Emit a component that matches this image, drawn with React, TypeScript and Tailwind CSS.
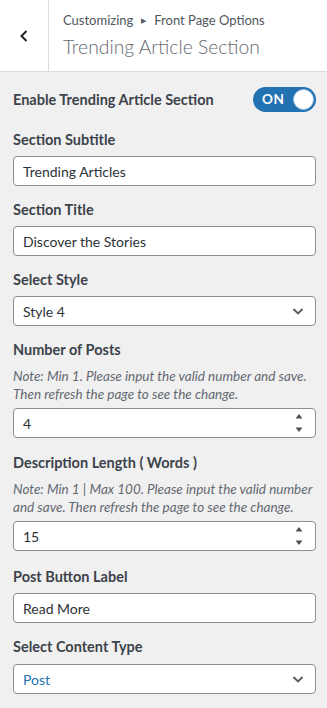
import React from 'react'

const FONT = { fontFamily: 'Lato, "Open Sans", Arial, sans-serif' }

const Label = ({ children }: { children: React.ReactNode }) => (
  <div className="text-[14.5px] font-bold text-[#3c434a] leading-[20px]">{children}</div>
)

const Note = ({ children }: { children: React.ReactNode }) => (
  <p className="mt-[7px] text-[13.5px] italic text-[#646970] leading-[18px]">{children}</p>
)

const TextInput = ({ value, mt = 'mt-[6px]' }: { value: string; mt?: string }) => (
  <div className={`${mt} h-[30px] rounded-[4px] border border-[#8c8f94] bg-white px-[9px] flex items-center text-[14px] text-[#2c3338]`}>
    {value}
  </div>
)

const NumberInput = ({ value }: { value: string }) => (
  <div className="mt-[5px] h-[30px] rounded-[4px] border border-[#8c8f94] bg-white pl-[9px] pr-[12px] flex items-center justify-between text-[14px] text-[#2c3338]">
    <span>{value}</span>
    <svg width="8" height="22" viewBox="0 0 8 22">
      <path d="M4 2 L7.5 6.5 L0.5 6.5 Z" fill="#505050" />
      <path d="M4 20 L7.5 15.5 L0.5 15.5 Z" fill="#505050" />
    </svg>
  </div>
)

const Select = ({ value, blue, mt = 'mt-[6px]' }: { value: string; blue?: boolean; mt?: string }) => (
  <div
    className={`${mt} h-[30px] rounded-[4px] border border-[#8c8f94] bg-white pl-[9px] pr-[10px] flex items-center justify-between text-[14px] ${
      blue ? 'text-[#2271b1]' : 'text-[#2c3338]'
    }`}
  >
    <span>{value}</span>
    <svg width="14" height="14" viewBox="0 0 14 14" fill="none">
      <path d="M2.5 5 L7 9.5 L11.5 5" stroke="#50575e" strokeWidth="1.8" />
    </svg>
  </div>
)

export default function App() {
  return (
    <div style={FONT} className="w-[327px] h-[708px] bg-[#f0f0f1] overflow-hidden">
      {/* Header */}
      <div className="flex h-[72px] bg-white border-b border-[#dcdcde]">
        <div className="w-[49px] shrink-0 border-r border-[#dcdcde] flex items-center justify-center">
          <svg width="12" height="14" viewBox="0 0 12 14" fill="none">
            <path d="M8.5 2 L3.5 7 L8.5 12" stroke="#1d2327" strokeWidth="2" />
          </svg>
        </div>
        <div className="pl-[14px] pt-[10px]">
          <div className="text-[13px] text-[#50575e] leading-[20px] flex items-center">
            Customizing
            <span className="mx-[8px] text-[7px] text-[#50575e]">▶</span>
            Front Page Options
          </div>
          <div className="text-[19.3px] font-light text-[#646970] leading-[28px] mt-[3px]">
            Trending Article Section
          </div>
        </div>
      </div>

      {/* Body */}
      <div className="pl-[13px] pr-[11px] pt-[15px] flex flex-col">
        <div className="flex items-center justify-between">
          <Label>Enable Trending Article Section</Label>
          <div className="w-[63px] h-[25px] rounded-full bg-[#2271b1] flex items-center justify-between pl-[9px] pr-[2px]">
            <span className="text-white text-[13.5px] font-bold tracking-[0.5px]">ON</span>
            <span className="w-[21px] h-[21px] rounded-full bg-white border border-[#9ec2e6]" />
          </div>
        </div>

        <div className="mt-[18px]">
          <Label>Section Subtitle</Label>
          <TextInput value="Trending Articles" />
        </div>

        <div className="mt-[14px]">
          <Label>Section Title</Label>
          <TextInput value="Discover the Stories" />
        </div>

        <div className="mt-[14px]">
          <Label>Select Style</Label>
          <Select value="Style 4" />
        </div>

        <div className="mt-[14px]">
          <Label>Number of Posts</Label>
          <Note>
            Note: Min 1. Please input the valid number and save. Then refresh the page to see the change.
          </Note>
          <NumberInput value="4" />
        </div>

        <div className="mt-[15px]">
          <Label>Description Length ( Words )</Label>
          <Note>
            Note: Min 1 | Max 100. Please input the valid number and save. Then refresh the page to see the change.
          </Note>
          <NumberInput value="15" />
        </div>

        <div className="mt-[16px]">
          <Label>Post Button Label</Label>
          <TextInput value="Read More" />
        </div>

        <div className="mt-[14px]">
          <Label>Select Content Type</Label>
          <Select value="Post" blue mt="mt-[7px]" />
        </div>
      </div>
    </div>
  )
}
